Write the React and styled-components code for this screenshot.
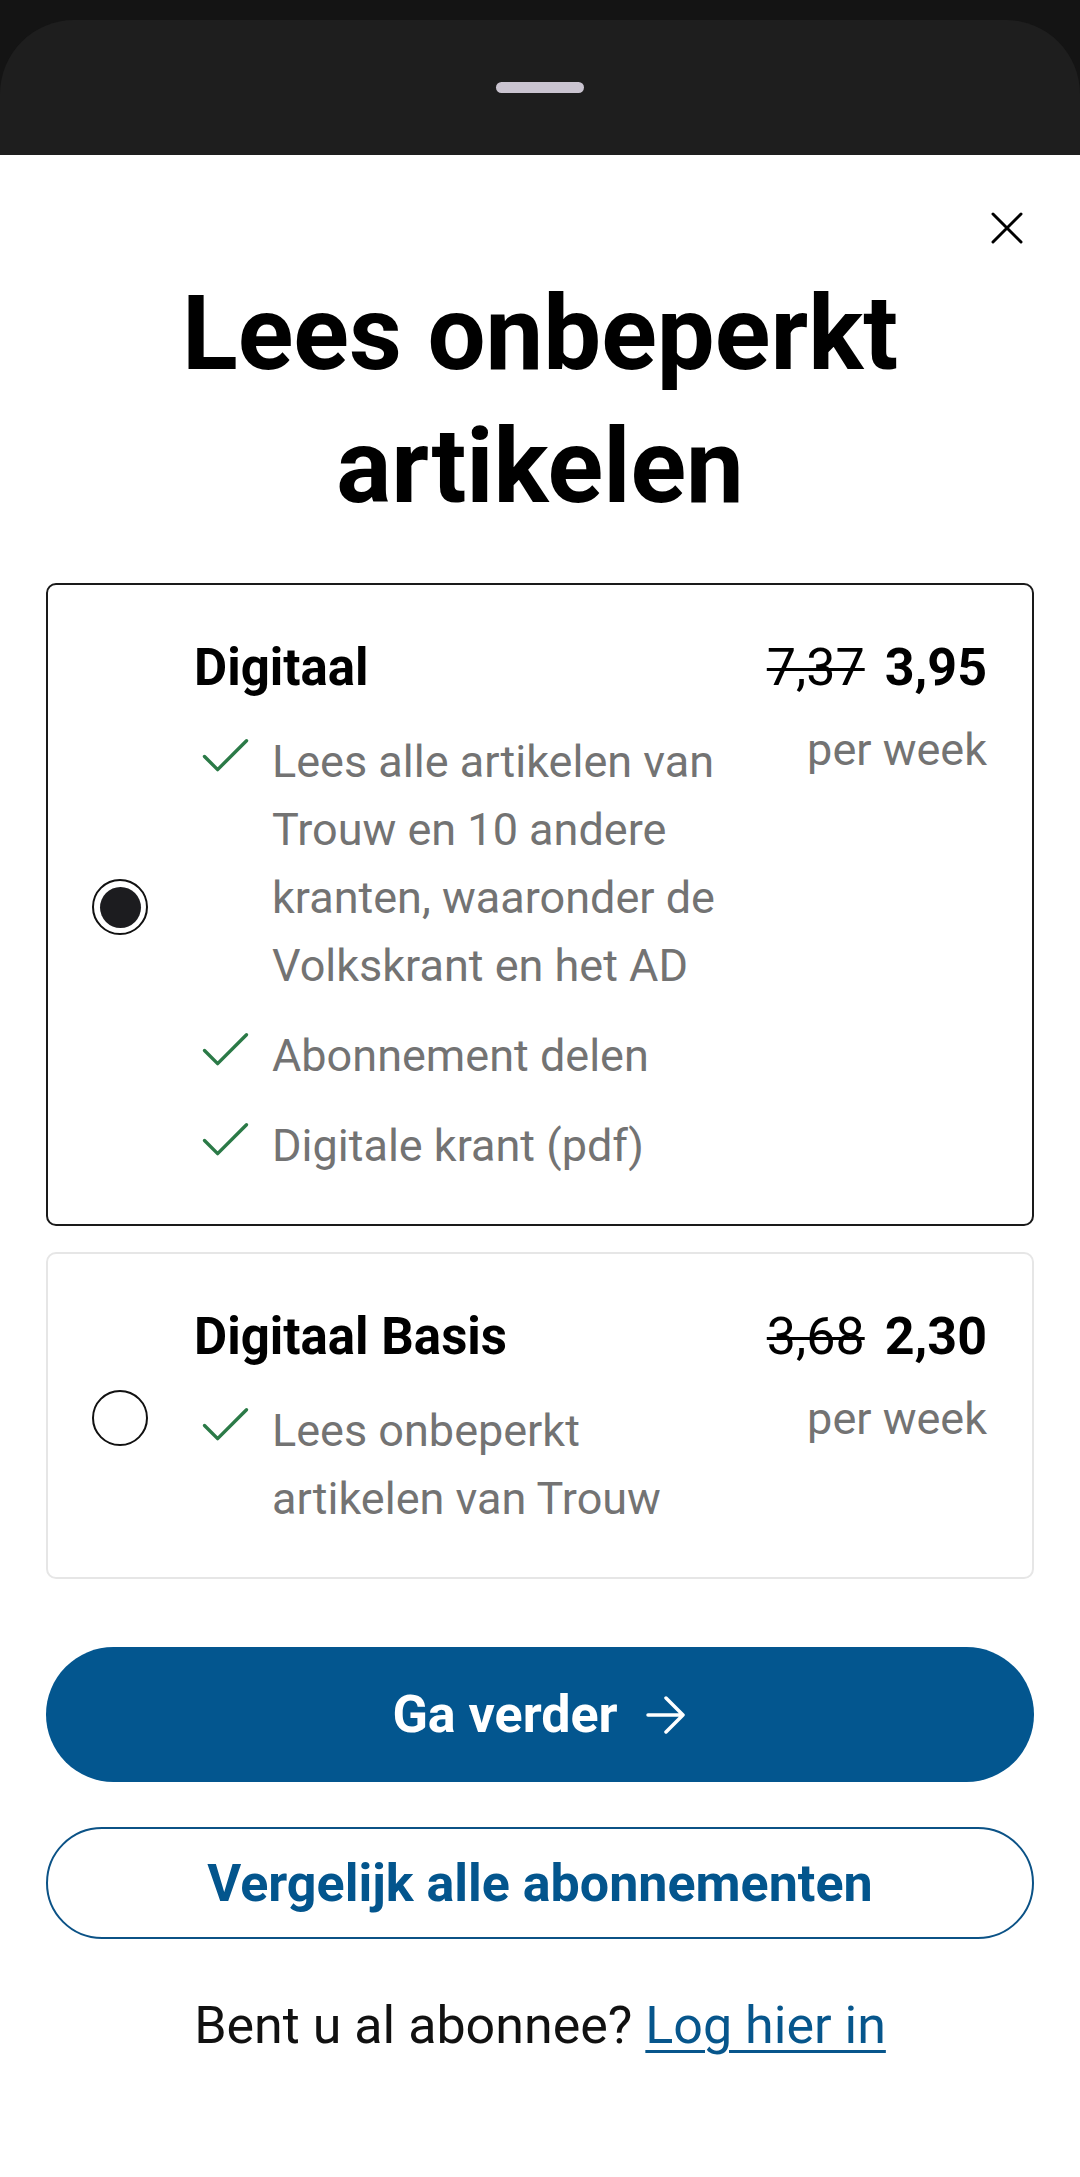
import React, { useState } from 'react';
import styled, { createGlobalStyle } from 'styled-components';

const GlobalStyle = createGlobalStyle`
  html, body {
    margin: 0;
    padding: 0;
    background: #ffffff;
  }
  body {
    font-family: Roboto, "Noto Sans", Arial, sans-serif;
    -webkit-font-smoothing: antialiased;
  }
  * {
    box-sizing: border-box;
  }
`;

const Page = styled.div`
  min-height: 100vh;
  background: #ffffff;
  display: flex;
  flex-direction: column;
`;

const Backdrop = styled.div`
  background-color: #141414;
  padding-top: 20px;
`;

const DarkSheet = styled.div`
  background-color: #1e1e1e;
  height: 135px;
  border-radius: 74px 74px 0 0;
  display: flex;
  justify-content: center;
`;

const Handle = styled.div`
  margin-top: 62px;
  width: 88px;
  height: 11px;
  border-radius: 6px;
  background-color: #cac4d0;
`;

const Content = styled.div`
  padding: 0 46px;
  display: flex;
  flex-direction: column;
`;

const CloseRow = styled.div`
  display: flex;
  justify-content: flex-end;
  padding-top: 49px;
`;

const CloseButton = styled.button`
  width: 48px;
  height: 48px;
  margin-right: 3px;
  padding: 0;
  border: none;
  background: none;
  display: flex;
  align-items: center;
  justify-content: center;
  cursor: pointer;
`;

const Title = styled.h1`
  margin: 15px 0 50px;
  font-size: 103px;
  line-height: 133px;
  font-weight: 700;
  text-align: center;
  color: #000000;
`;

const PlanList = styled.div`
  display: flex;
  flex-direction: column;
  gap: 26px;
`;

const PlanCard = styled.label`
  display: flex;
  align-items: center;
  border: 2px solid ${(p) => (p.$selected ? '#1a1a1a' : '#e6e6e6')};
  border-radius: 10px;
  padding: 49px 45px 44px 44px;
  cursor: pointer;
`;

const Radio = styled.span`
  flex: none;
  width: 56px;
  height: 56px;
  border-radius: 50%;
  border: 2.5px solid #111111;
  margin-right: 46px;
  display: flex;
  align-items: center;
  justify-content: center;

  &::after {
    content: '';
    width: 41px;
    height: 41px;
    border-radius: 50%;
    background-color: #1c1c1f;
    display: ${(p) => (p.$checked ? 'block' : 'none')};
  }
`;

const PlanBody = styled.div`
  flex: 1;
  display: flex;
  gap: 24px;
`;

const PlanInfo = styled.div`
  flex: 1;
`;

const PlanName = styled.div`
  font-size: 51px;
  line-height: 68px;
  font-weight: 700;
  color: #000000;
`;

const FeatureList = styled.ul`
  list-style: none;
  margin: 26px 0 0;
  padding: 0;
  display: flex;
  flex-direction: column;
  gap: 22px;
`;

const Feature = styled.li`
  display: flex;
  align-items: flex-start;
  font-size: 45px;
  line-height: 68px;
  color: #737373;
`;

const CheckIcon = styled.svg`
  flex: none;
  width: 63px;
  height: 63px;
  margin-top: -3px;
  margin-right: 15px;
`;

const PriceColumn = styled.div`
  flex: none;
  display: flex;
  flex-direction: column;
  align-items: flex-end;
`;

const PriceRow = styled.div`
  display: flex;
  gap: 20px;
  font-size: 52px;
  line-height: 68px;
  color: #000000;
`;

const OldPrice = styled.span`
  font-weight: 400;
  text-decoration: line-through;
  text-decoration-thickness: 3px;
`;

const NewPrice = styled.span`
  font-weight: 700;
`;

const Period = styled.div`
  margin-top: 14px;
  font-size: 45px;
  line-height: 68px;
  color: #737373;
`;

const PrimaryButton = styled.button`
  margin-top: 68px;
  height: 135px;
  border: none;
  border-radius: 68px;
  background-color: #03568f;
  color: #ffffff;
  font-family: inherit;
  font-size: 52px;
  font-weight: 700;
  display: flex;
  align-items: center;
  justify-content: center;
  gap: 28px;
  padding-right: 8px;
  cursor: pointer;
`;

const SecondaryButton = styled.button`
  margin-top: 45px;
  height: 112px;
  border: 2px solid #0b5286;
  border-radius: 56px;
  background-color: #ffffff;
  color: #03558d;
  font-family: inherit;
  font-size: 52px;
  font-weight: 700;
  display: flex;
  align-items: center;
  justify-content: center;
  cursor: pointer;
`;

const LoginText = styled.p`
  margin: 49px 0 0;
  text-align: center;
  font-size: 52px;
  line-height: 75px;
  color: #111111;
`;

const LoginLink = styled.a`
  color: #07568c;
  text-decoration: underline;
  text-decoration-thickness: 3px;
  text-underline-offset: 7px;
`;

const plans = [
  {
    id: 'digitaal',
    name: 'Digitaal',
    oldPrice: '7,37',
    price: '3,95',
    features: [
      'Lees alle artikelen van Trouw en 10 andere kranten, waaronder de Volkskrant en het AD',
      'Abonnement delen',
      'Digitale krant (pdf)',
    ],
  },
  {
    id: 'basis',
    name: 'Digitaal Basis',
    oldPrice: '3,68',
    price: '2,30',
    features: ['Lees onbeperkt artikelen van Trouw'],
  },
];

const Check = () => (
  <CheckIcon viewBox="0 0 24 24" fill="none">
    <path
      d="M20 6 9 17l-5-5"
      stroke="#2b7a47"
      strokeWidth="1.3"
      strokeLinecap="round"
      strokeLinejoin="round"
    />
  </CheckIcon>
);

const App = () => {
  const [selected, setSelected] = useState('digitaal');

  return (
    <Page>
      <GlobalStyle />
      <Backdrop>
        <DarkSheet>
          <Handle />
        </DarkSheet>
      </Backdrop>
      <Content>
        <CloseRow>
          <CloseButton aria-label="Sluiten">
            <svg width="32" height="32" viewBox="0 0 32 32">
              <path
                d="M2 2 30 30M30 2 2 30"
                stroke="#000"
                strokeWidth="3"
                strokeLinecap="round"
              />
            </svg>
          </CloseButton>
        </CloseRow>
        <Title>
          Lees onbeperkt
          <br />
          artikelen
        </Title>
        <PlanList>
          {plans.map((plan) => (
            <PlanCard
              key={plan.id}
              $selected={selected === plan.id}
              onClick={() => setSelected(plan.id)}
            >
              <Radio $checked={selected === plan.id} />
              <PlanBody>
                <PlanInfo>
                  <PlanName>{plan.name}</PlanName>
                  <FeatureList>
                    {plan.features.map((f) => (
                      <Feature key={f}>
                        <Check />
                        <span>{f}</span>
                      </Feature>
                    ))}
                  </FeatureList>
                </PlanInfo>
                <PriceColumn>
                  <PriceRow>
                    <OldPrice>{plan.oldPrice}</OldPrice>
                    <NewPrice>{plan.price}</NewPrice>
                  </PriceRow>
                  <Period>per week</Period>
                </PriceColumn>
              </PlanBody>
            </PlanCard>
          ))}
        </PlanList>
        <PrimaryButton>
          Ga verder
          <svg width="40" height="38" viewBox="0 0 40 38" fill="none">
            <path
              d="M2 19H37M20 2 37 19 20 36"
              stroke="#fff"
              strokeWidth="3.5"
              strokeLinecap="round"
              strokeLinejoin="round"
            />
          </svg>
        </PrimaryButton>
        <SecondaryButton>Vergelijk alle abonnementen</SecondaryButton>
        <LoginText>
          Bent u al abonnee? <LoginLink href="#">Log hier in</LoginLink>
        </LoginText>
      </Content>
    </Page>
  );
};

export default App;
